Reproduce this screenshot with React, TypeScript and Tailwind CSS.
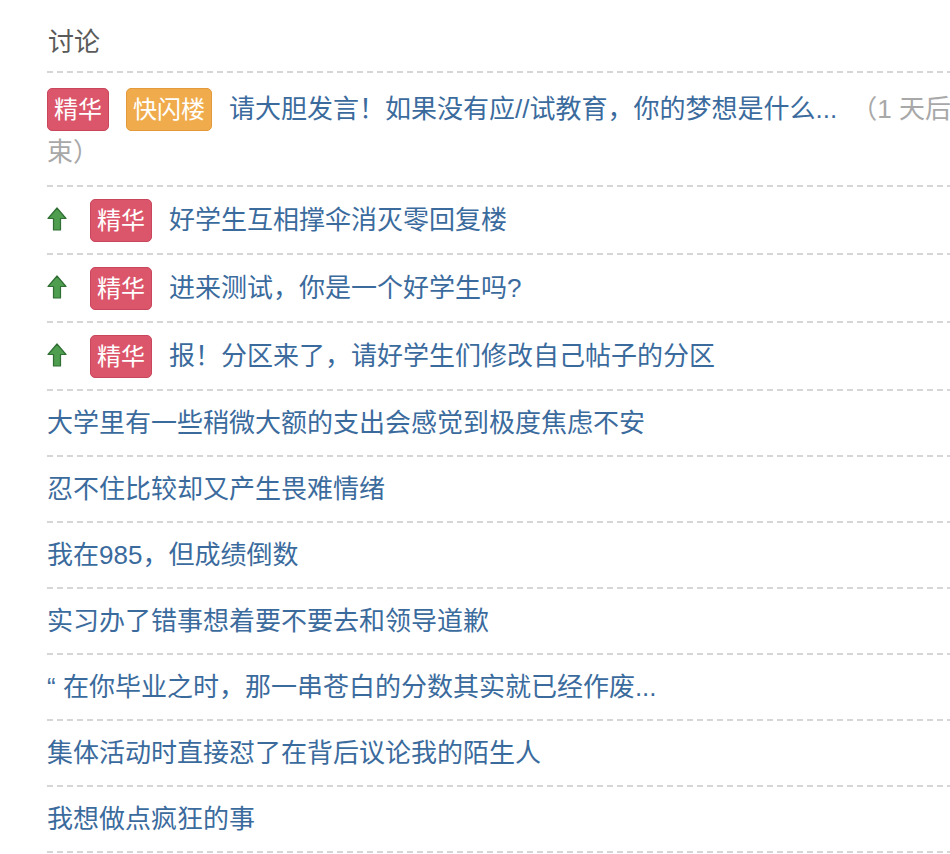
import React from 'react';

type Topic = {
  title: string;
  badges?: string[];
  pinned?: boolean;
  note?: string;
};

const topics: Topic[] = [
  {
    title: '请大胆发言！如果没有应//试教育，你的梦想是什么...',
    badges: ['精华', '快闪楼'],
    note: '（1 天后结束）',
  },
  { title: '好学生互相撑伞消灭零回复楼', badges: ['精华'], pinned: true },
  { title: '进来测试，你是一个好学生吗?', badges: ['精华'], pinned: true },
  { title: '报！分区来了，请好学生们修改自己帖子的分区', badges: ['精华'], pinned: true },
  { title: '大学里有一些稍微大额的支出会感觉到极度焦虑不安' },
  { title: '忍不住比较却又产生畏难情绪' },
  { title: '我在985，但成绩倒数' },
  { title: '实习办了错事想着要不要去和领导道歉' },
  { title: '“ 在你毕业之时，那一串苍白的分数其实就已经作废...' },
  { title: '集体活动时直接怼了在背后议论我的陌生人' },
  { title: '我想做点疯狂的事' },
];

const Separator = () => (
  <div className="h-[2px] bg-[image:repeating-linear-gradient(90deg,#d6d6d6_0px,#d6d6d6_6px,transparent_6px,transparent_10px)]" />
);

const Badge = ({ label }: { label: string }) => {
  const orange = label === '快闪楼';
  return (
    <span
      className={
        orange
          ? 'inline-block align-top mr-[17px] px-[6px] py-[4px] leading-[33px] text-[24px] text-white rounded-[5px] border border-[#e39a3b] bg-[#f0ac4c]'
          : 'inline-block align-top mr-[17px] px-[6px] py-[4px] leading-[33px] text-[24px] text-white rounded-[5px] border border-[#c9475c] bg-[#dc566b]'
      }
    >
      {label}
    </span>
  );
};

const UpArrow = () => (
  <svg
    className="inline-block align-top mt-[8px] mr-[23px]"
    width="20"
    height="24"
    viewBox="0 0 20 24"
  >
    <path
      d="M10 1 L19 11.5 L13.5 11.5 L13.5 23 L6.5 23 L6.5 11.5 L1 11.5 Z"
      fill="#4f9d4f"
      stroke="#2f6f34"
      strokeWidth="1.2"
      strokeLinejoin="round"
    />
  </svg>
);

const TopicRow = ({ topic, first }: { topic: Topic; first: boolean }) => {
  const rowClass = first
    ? 'pt-[15px] pb-[11px] leading-[43px]'
    : topic.badges
      ? 'pt-[12px] pb-[11px] leading-[43px]'
      : 'py-[12px] leading-[40px]';

  return (
    <div className={rowClass}>
      {topic.pinned && <UpArrow />}
      {topic.badges?.map((b) => <Badge key={b} label={b} />)}
      <a className="text-[#3b6b9d] cursor-pointer">{topic.title}</a>
      {topic.note && <span className="ml-[7px] text-[#a8a8a8]"> {topic.note}</span>}
    </div>
  );
};

export default function App() {
  return (
    <div
      className="w-screen h-screen overflow-hidden bg-white pl-[47px]"
      style={{ fontFamily: '"Liberation Sans", "Noto Sans CJK SC", sans-serif' }}
    >
      <div className="w-[940px] text-[26px]">
        <h2 className="pt-[24px] pb-[11px] leading-[36px] text-[26px] font-normal text-[#5a5a5a] pl-[1px]">
          讨论
        </h2>
        <Separator />
        {topics.map((t, i) => (
          <div key={i}>
            <TopicRow topic={t} first={i === 0} />
            <Separator />
          </div>
        ))}
      </div>
    </div>
  );
}
